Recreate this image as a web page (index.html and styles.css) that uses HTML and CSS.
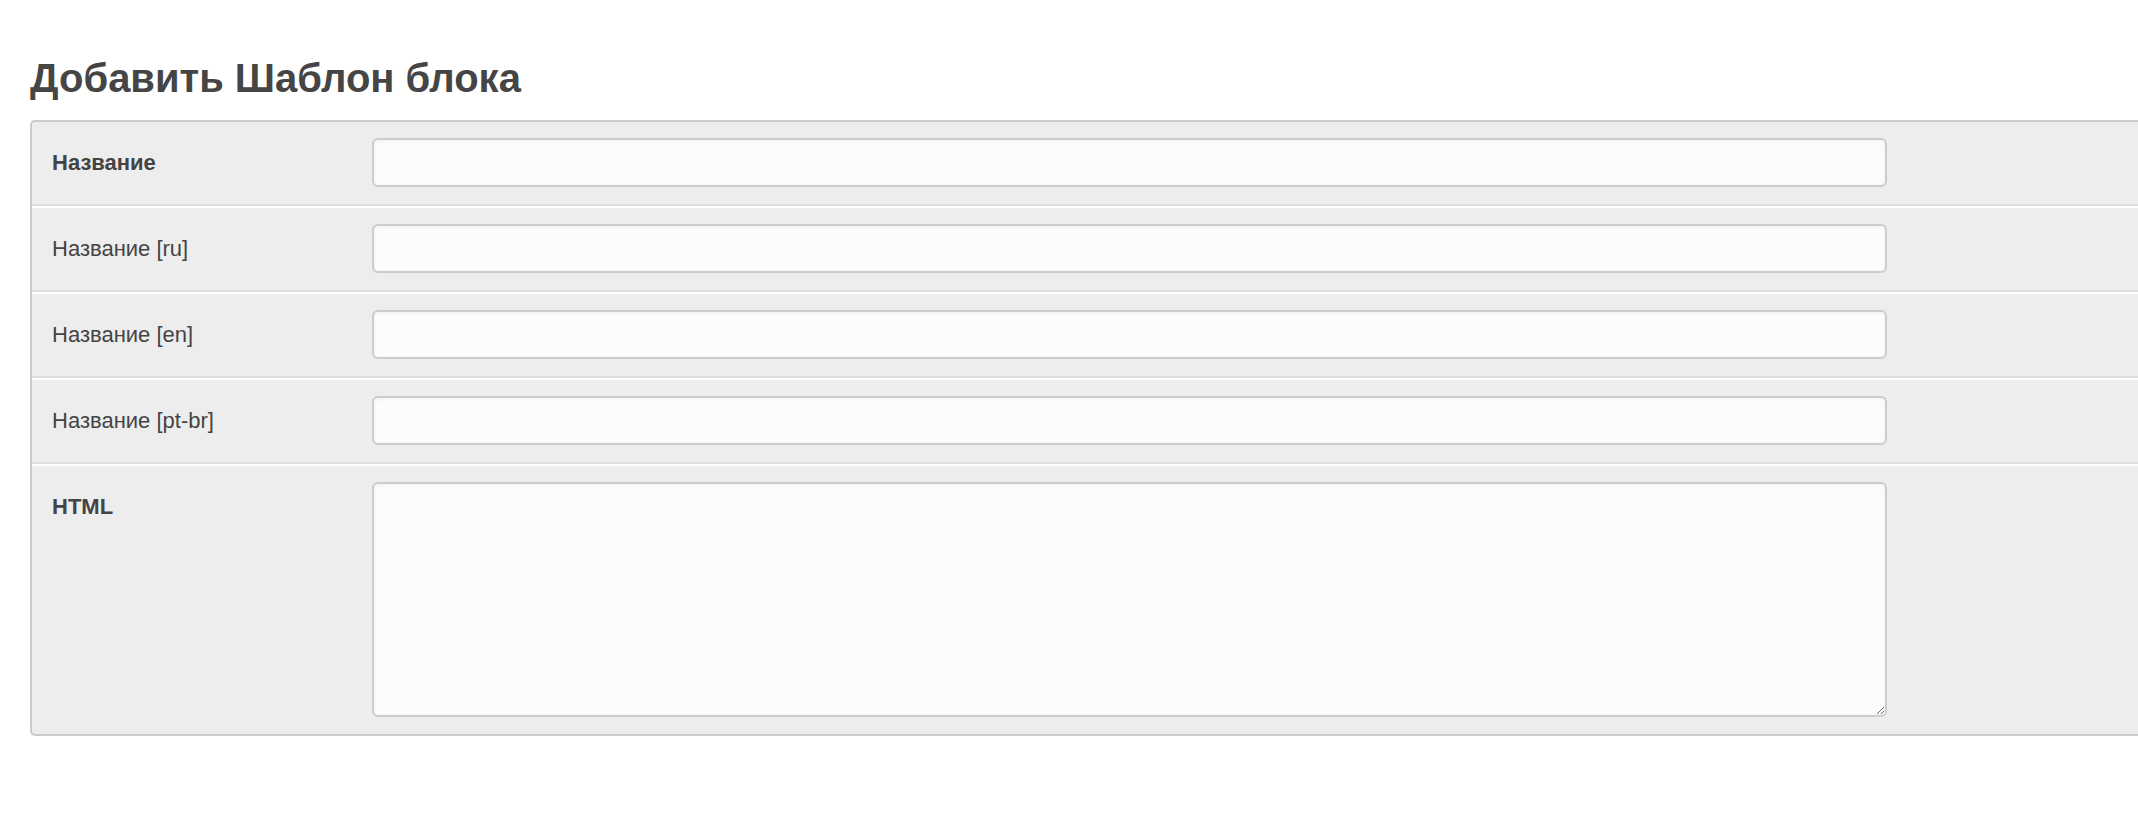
FILE: index.html
```html
<!DOCTYPE html>
<html lang="ru">
<head>
<meta charset="utf-8">
<title>Добавить Шаблон блока</title>
<link rel="stylesheet" href="styles.css">
</head>
<body>
<div class="page">
  <h1 class="title">Добавить Шаблон блока</h1>
  <form class="panel">
    <div class="row">
      <label class="label label-strong">Название</label>
      <input class="field" type="text">
    </div>
    <div class="row">
      <label class="label">Название [ru]</label>
      <input class="field" type="text">
    </div>
    <div class="row">
      <label class="label">Название [en]</label>
      <input class="field" type="text">
    </div>
    <div class="row">
      <label class="label">Название [pt-br]</label>
      <input class="field" type="text">
    </div>
    <div class="row">
      <label class="label label-strong">HTML</label>
      <textarea class="field area"></textarea>
    </div>
  </form>
</div>
</body>
</html>
```

FILE: styles.css
```css
html, body {
  margin: 0;
  padding: 0;
  background: #ffffff;
}

body {
  font-family: "Liberation Sans", Arial, sans-serif;
  color: #444444;
}

.page {
  padding: 55px 0 0 30px;
}

.title {
  margin: 0 0 19px 0;
  font-size: 40px;
  line-height: 46px;
  font-weight: bold;
  color: #454545;
}

.panel {
  background: #ededed;
  border: 2px solid #cbcbcb;
  border-right: none;
  border-radius: 5px 0 0 5px;
}

.row {
  display: grid;
  grid-template-columns: 340px 1515px;
  align-items: start;
  padding: 16px 0 17px 0;
  border-top: 2px solid #ffffff;
  border-bottom: 2px solid #dddddd;
}

.row:first-child {
  border-top: none;
}

.row:last-child {
  border-bottom: none;
}

.label {
  padding-left: 20px;
  font-size: 22px;
  line-height: 49px;
  color: #444444;
}

.label-strong {
  font-weight: bold;
}

.field {
  box-sizing: border-box;
  display: block;
  width: 1515px;
  height: 49px;
  margin: 0;
  border: 2px solid #cccccc;
  border-radius: 6px;
  background: #fcfcfc;
  box-shadow: inset 0 1px 4px rgba(0, 0, 0, 0.05);
  font-family: "Liberation Sans", Arial, sans-serif;
  font-size: 20px;
  outline: none;
}

.area {
  height: 235px;
  resize: both;
}
```
